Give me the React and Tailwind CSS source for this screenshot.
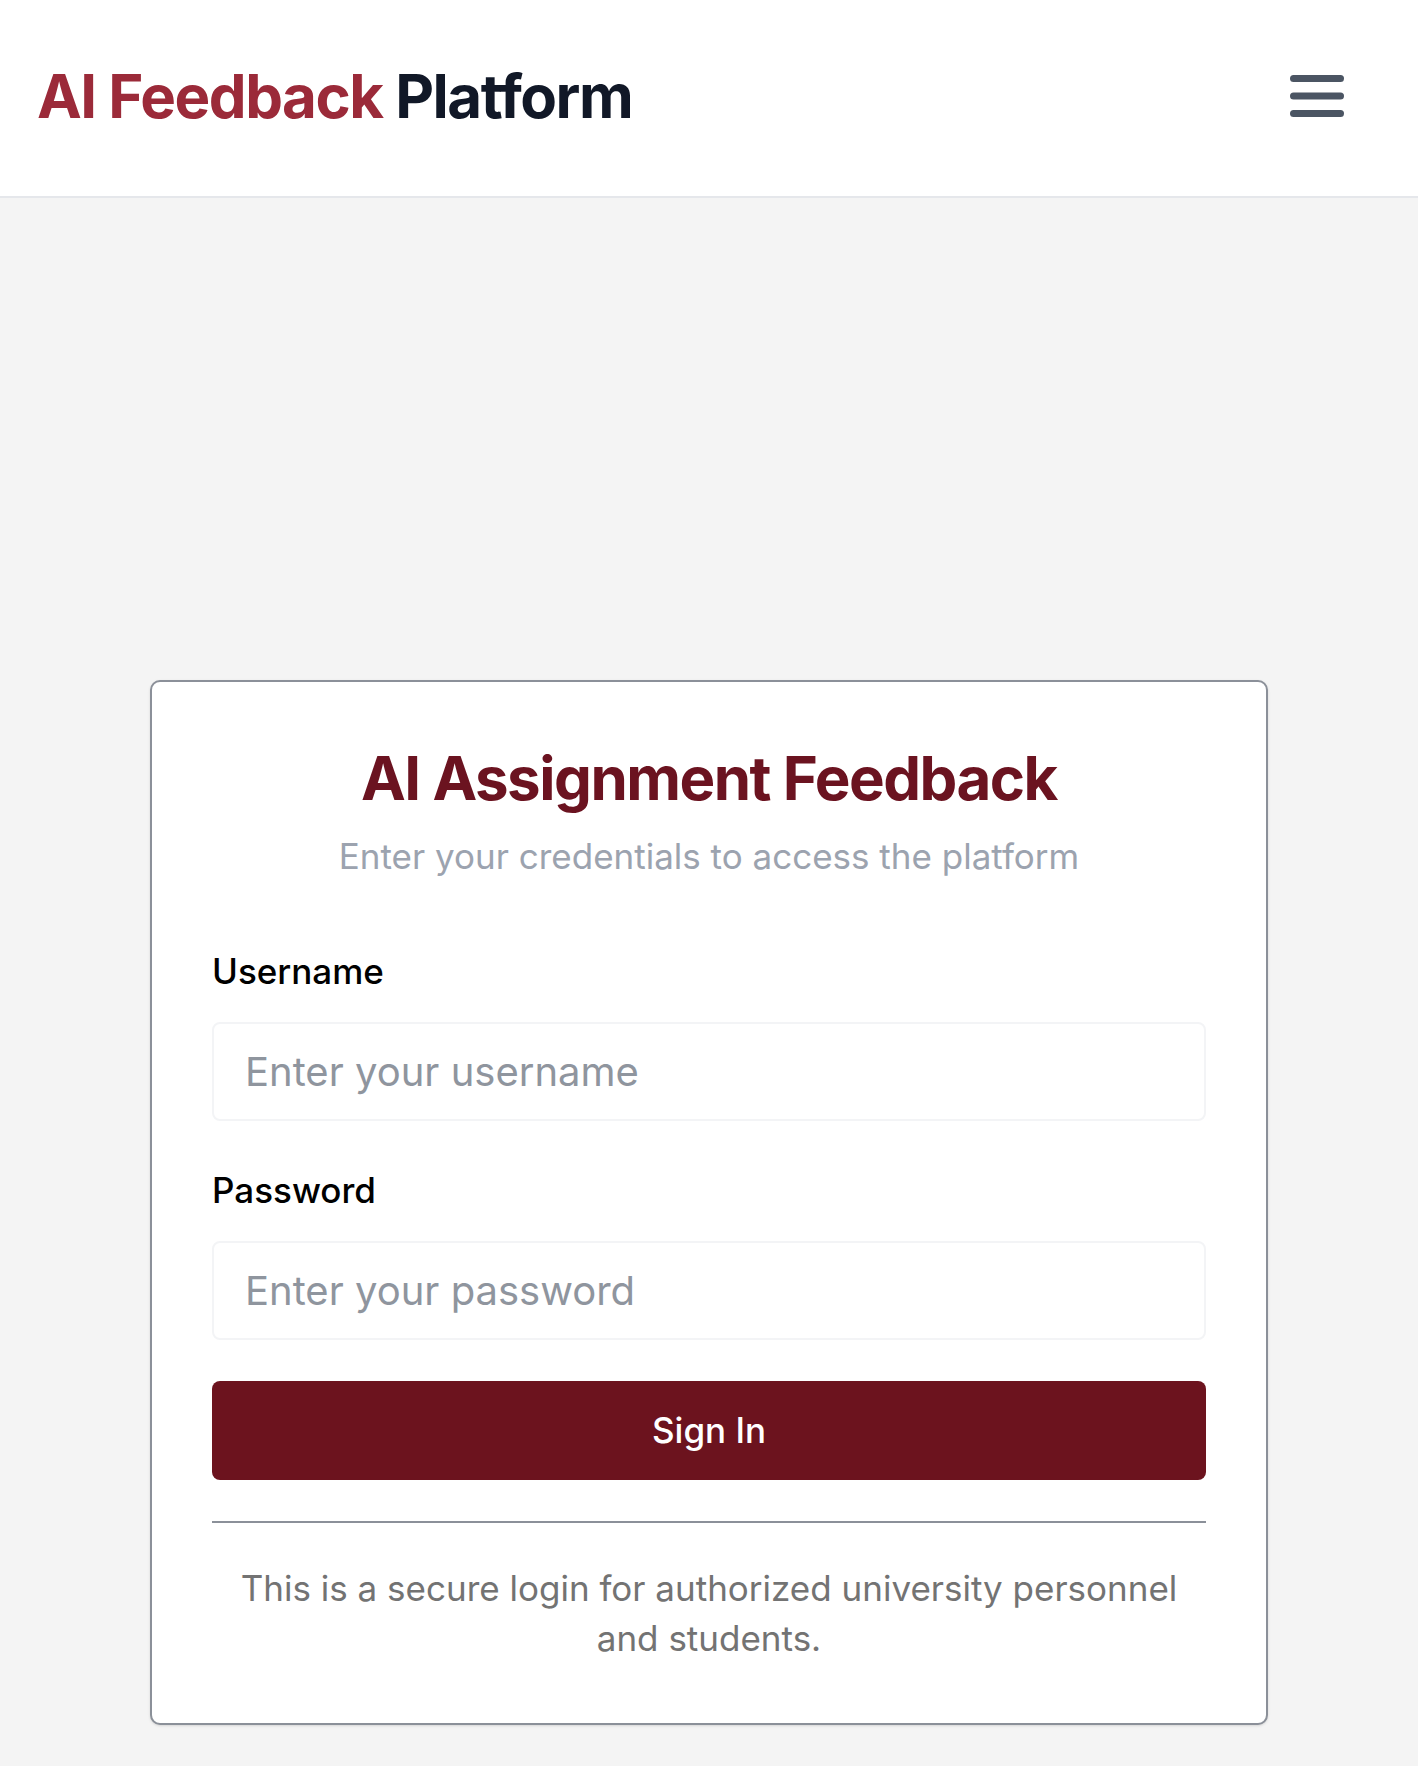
export default function App() {
  return (
    <div className="min-h-[1766px] bg-[#f4f4f4] font-['Inter',sans-serif]">
      {/* Header */}
      <header className="h-[198px] bg-white border-b-2 border-[#e5e7eb] flex items-center justify-between pl-[37px] pr-[74px] pb-[4px]">
        <h1 className="text-[60px] font-bold tracking-tight leading-none">
          <span className="text-[#9b2a39]">AI Feedback</span>{' '}
          <span className="text-[#111827]">Platform</span>
        </h1>
        <button className="p-0" aria-label="Menu">
          <svg width="54" height="42" viewBox="0 0 54 42" fill="none">
            <line x1="3.5" y1="3.5" x2="50.5" y2="3.5" stroke="#4b5563" strokeWidth="7" strokeLinecap="round" />
            <line x1="3.5" y1="21" x2="50.5" y2="21" stroke="#4b5563" strokeWidth="7" strokeLinecap="round" />
            <line x1="3.5" y1="38.5" x2="50.5" y2="38.5" stroke="#4b5563" strokeWidth="7" strokeLinecap="round" />
          </svg>
        </button>
      </header>

      {/* Login card */}
      <main className="pt-[482px] pb-[43px]">
        <div className="mx-auto w-[1118px] bg-white border-2 border-[#8b9099] rounded-[10px] shadow-sm p-[60px]">
          <div className="text-center">
            <h2 className="text-[60px] leading-[72px] font-bold tracking-tight text-[#6b1320]">
              AI Assignment Feedback
            </h2>
            <p className="mt-[18px] text-[35px] leading-[48px] text-[#9ca3af]">
              Enter your credentials to access the platform
            </p>
          </div>

          <form className="mt-[66px]" onSubmit={(e) => e.preventDefault()}>
            <div>
              <label className="block text-[35px] leading-[50px] font-medium text-black">Username</label>
              <input
                type="text"
                placeholder="Enter your username"
                className="mt-[26px] block w-full h-[99px] px-[31px] text-[40px] border-2 border-[#f3f4f6] rounded-[8px] placeholder:text-[#8f959e] outline-none"
              />
            </div>
            <div className="mt-[44px]">
              <label className="block text-[35px] leading-[50px] font-medium text-black">Password</label>
              <input
                type="password"
                placeholder="Enter your password"
                className="mt-[26px] block w-full h-[99px] px-[31px] text-[40px] border-2 border-[#f3f4f6] rounded-[8px] placeholder:text-[#8f959e] outline-none"
              />
            </div>
            <button
              type="submit"
              className="mt-[41px] w-full h-[99px] bg-[#6c131e] text-white text-[35px] font-medium rounded-[8px]"
            >
              Sign In
            </button>
          </form>

          <div className="mt-[41px] border-t-2 border-[#8b9099] pt-[40px]">
            <p className="text-center text-[35px] leading-[50px] text-[#737373] px-[20px]">
              This is a secure login for authorized university personnel and students.
            </p>
          </div>
        </div>
      </main>
    </div>
  )
}
